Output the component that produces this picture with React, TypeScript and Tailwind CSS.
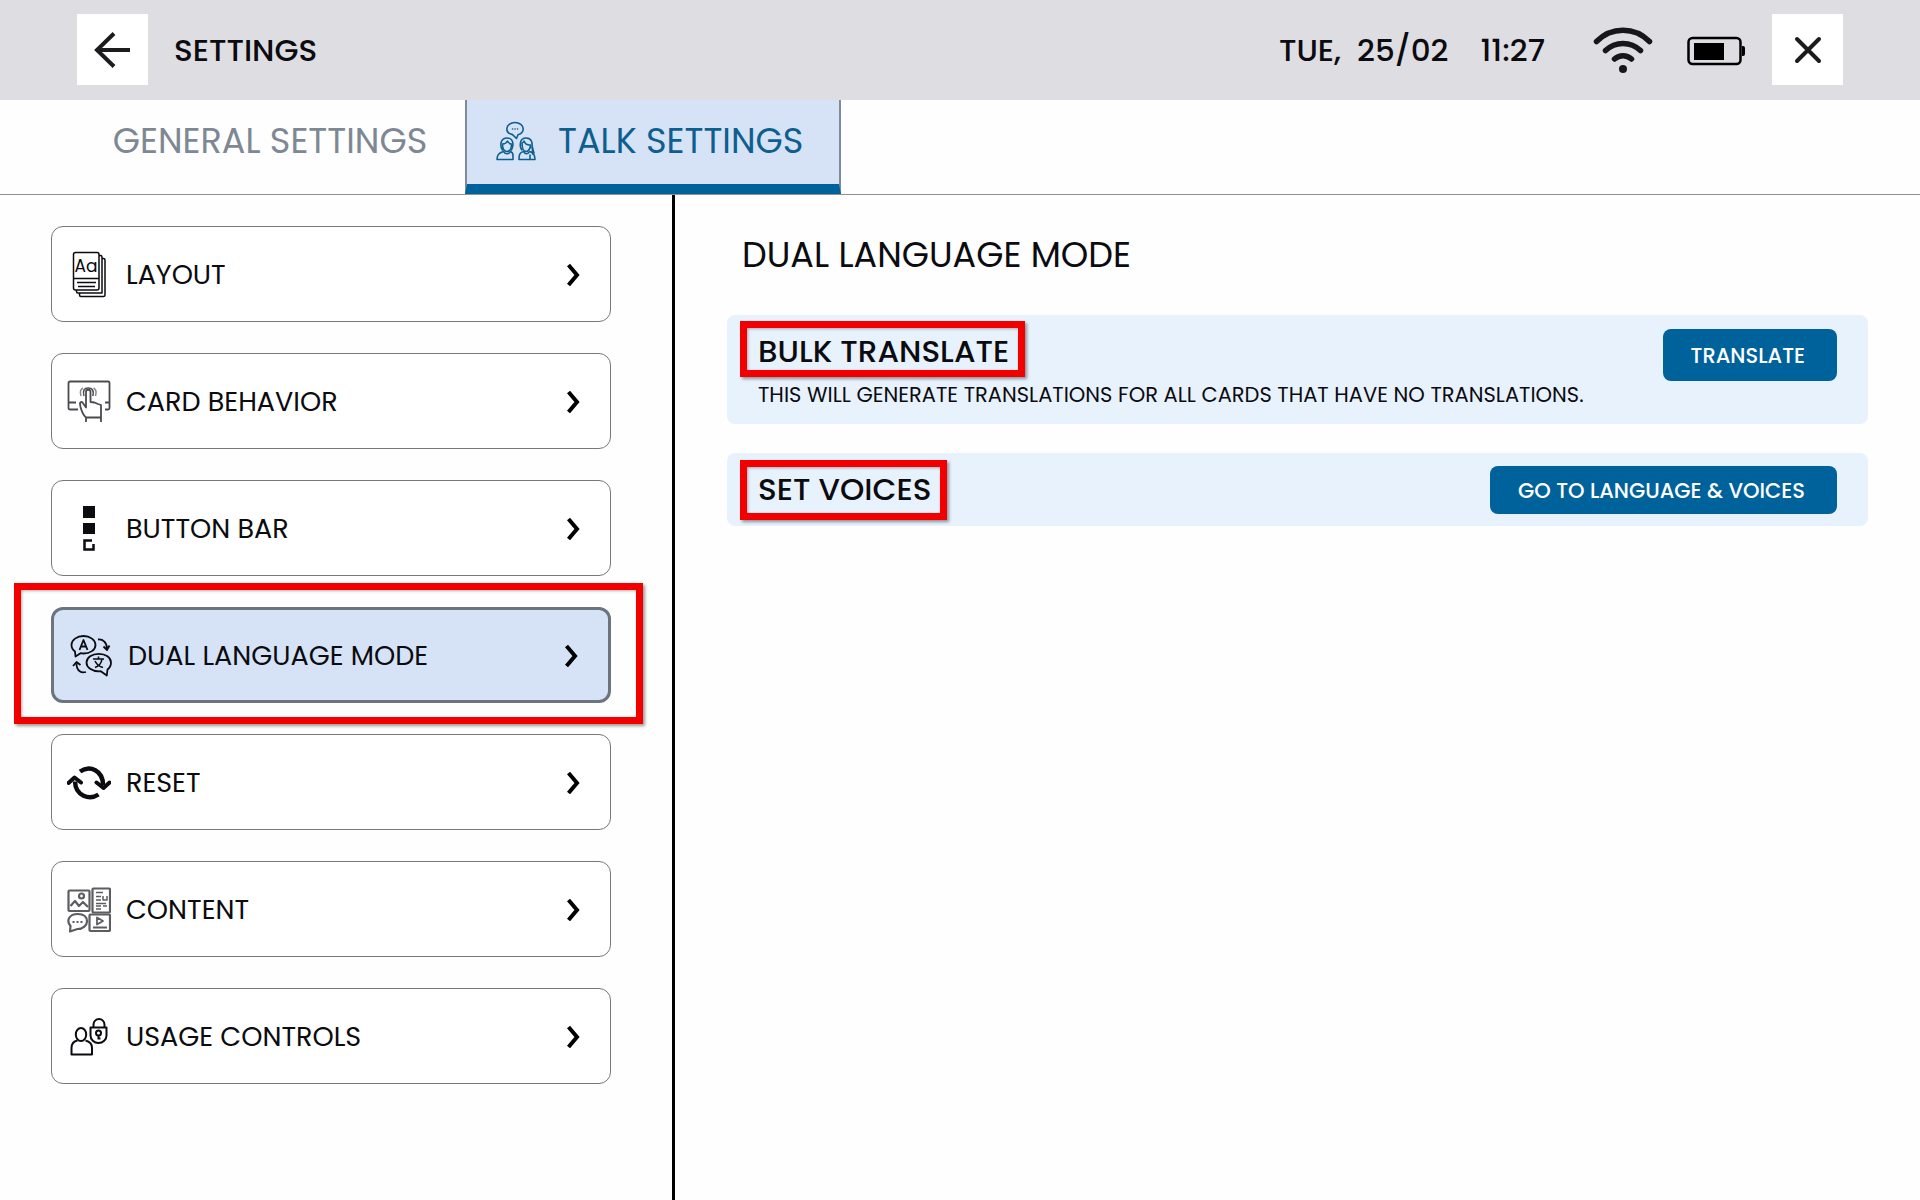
import type { ReactNode } from 'react'
import clsx from 'clsx'

function TalkIcon() {
  return (
    <svg width="40" height="40" viewBox="0 0 40 40" fill="none" stroke="currentColor" strokeWidth="1.600" strokeLinejoin="round" strokeLinecap="round" aria-hidden="true">
      <path d="M16.500 13.600C13.200 13 10.800 10.800 10.800 8 10.800 4.300 14.500 1.500 19 1.500s8.200 2.800 8.200 6.500c0 2.700-2.200 4.900-5.200 5.700l-1.500 3.800z" />
      <path d="M16.500 8h.1M19 8h.1M21.500 8h.1" />
      <path d="M6.500 29c-3-4.500-2-12 4.500-12s7 7 4.500 12" />
      <path d="M6.500 23c0 4.500 1.500 7.500 4.500 7.500s4.500-3 4.500-7.500c-1.500 0-3-1-4-3-1 2-2.500 3-5 3z" />
      <path d="M1 38.500c0-5 2-6.500 6.500-8 1.500 3 5.500 3 7 0 1.800.6 2.500 2 2.500 4v4z" />
      <path d="M26 29c-2.500-3-3-12 4-12 6 0 6.500 5 6 9l2 6" />
      <path d="M26 22c0 4.500 1.500 8.500 4 8.500s4.500-3 4.500-6.500c-3 .3-5.500-1.500-6.500-4-.5 1.200-1 2-2 2z" />
      <path d="M23 38.500c0-4.500.5-7 4.500-8 1.500 3 4.500 3 6 0 4 1 5.500 3 5.500 8zM34 34v4M36.500 26v7" />
    </svg>
  )
}

function NavIcon({ children }: { children: ReactNode }) {
  return (
    <svg width="44" height="48" viewBox="0 0 44 48" fill="none" stroke="currentColor" strokeWidth="1.800" strokeLinejoin="round" aria-hidden="true" className="shrink-0">
      {children}
    </svg>
  )
}

function LayoutIcon() {
  return (
    <NavIcon>
      <rect x="6.500" y="2.500" width="25.500" height="37.500" rx="2" strokeWidth="1.500" />
      <path d="M32 5.500h1.500a1.500 1.500 0 0 1 1.500 1.500v36H11a1.500 1.500 0 0 1-1.500-1.500V40" strokeWidth="1.500" />
      <path d="M35 8.500h1.500A1.500 1.500 0 0 1 38 10v35a1.500 1.500 0 0 1-1.500 1.500H14a1.500 1.500 0 0 1-1.500-1.500v-2" strokeWidth="1.500" />
      <path d="M7 28.500h25M10 32.500h19M11 36.500h17" strokeWidth="1.500" />
      <text x="19" y="22" textAnchor="middle" fontSize="17" fill="currentColor" stroke="none">Aa</text>
    </NavIcon>
  )
}

function TouchIcon() {
  return (
    <NavIcon>
      <g stroke="#4a4a4f">
        <path d="M11 32.500H3A1.500 1.500 0 0 1 1.500 31V6A1.500 1.500 0 0 1 3 4.500h38A1.500 1.500 0 0 1 42.500 6v25a1.500 1.500 0 0 1-1.500 1.500h-3M2 25.500h7M38 25.500h4" />
        <path d="M19 45v-4.500c-2.500-2-4-5-5.500-10.500l-.5-3.500c0-1.500 1.500-2 2.500-1l3.500 5V15c0-3 4.500-3 4.500 0v10l4 .5 3.500 1.500 3 1V45M19 40.500h15.500" />
        <path d="M17 19c-1.500-6 .5-8 4.200-8s6 2 4.600 8" strokeWidth="1.500" />
        <path d="M14 19c-1.500-5 0-7 2-8M28.500 19c1.500-5 0-7-2-8" strokeWidth="1.500" stroke="#88888c" />
      </g>
    </NavIcon>
  )
}

function ButtonBarIcon() {
  return (
    <NavIcon>
      <path d="M16 2h12v12H16zM16 19h12v11H16z" fill="currentColor" stroke="none" />
      <path d="M25 36.500h-7.500v9h9V40" strokeWidth="2.500" strokeLinejoin="miter" />
    </NavIcon>
  )
}

function DualLanguageIcon() {
  return (
    <NavIcon>
      <path d="M6 20.500C3.800 19 2.500 16.700 2.500 14c0-5 5.400-9 12-9s12 4 12 9-5.400 8.500-12 8.500c-1 0-2-.1-3-.3L6.500 25.500z" />
      <path d="M10.500 19l4-10 4 10M12 15.500h5" />
      <path d="M38.500 38.500C40.500 37 42 34.500 42 31.500c0-5-5.400-8.700-12.200-8.700S17.500 26.500 17.500 31.500s5.500 8.800 12.300 8.800l2-.1 6 4.300z" />
      <path d="M24 28h11M29.500 25.500V28M26 36.500c4-1.500 6.500-4.500 7-8.500M26 30c1.500 3 4 5.500 8 6.500" strokeWidth="1.600" />
      <path d="M29 8.500c5-.5 9 3 9 9.500M34.500 15.500l3.500 3.500 2.500-4.500" />
      <path d="M17 41c-5 1.500-9.500-1.500-9.500-8.500M4 35l3.500-4 4 3" />
    </NavIcon>
  )
}

function ResetIcon() {
  return (
    <NavIcon>
      <g strokeWidth="4.500">
        <path d="M13 13.500c10-7 23-1 23 13.500" />
        <path d="M31.500 36.500c-9 6-23 1.500-23.500-13" />
        <path d="M1.500 25L7.500 19.500 14 24.500M29.500 24.500l7 5.500 6-5.500" strokeWidth="4" strokeLinecap="round" />
      </g>
    </NavIcon>
  )
}

function ContentIcon() {
  return (
    <NavIcon>
      <g stroke="#5c5c61" strokeWidth="2.200">
        <rect x="1.500" y="5.500" width="21" height="20.500" rx="1" />
        <circle cx="14.500" cy="11" r="2.500" />
        <path d="M3.500 21l4.500-5 4 5 4-4 5 5" />
        <rect x="25.500" y="3.500" width="17.500" height="24" rx="1" />
        <path d="M29 7.500h7M29 11.500h5M29 15h5M29 18.500h10M29 21h5M36 21h4M29 24h5M36 11v4h4v-4" strokeWidth="1.500" />
        <path d="M3.500 41C-1.500 35 3 29 10.500 29s9.500 4 9.500 7.500-4 7.500-9.500 7.500L3 46.500z" />
        <path d="M5.500 37h2M9.500 37h2M13.500 37h2" strokeWidth="2" />
        <rect x="22.500" y="29.500" width="20.500" height="16.500" rx="1" />
        <path d="M30 32.500v7l6-3.500zM26 42.500h14" strokeWidth="1.800" />
      </g>
    </NavIcon>
  )
}

function UsageIcon() {
  return (
    <NavIcon>
      <g strokeWidth="2">
        <ellipse cx="14" cy="22.500" rx="5.200" ry="6.500" />
        <path d="M10.500 28.500C6 29.500 4.500 32 4.500 36v6.500h20.500V36c0-4-2-6.500-6.500-7.500" />
        <path d="M26.500 15v-2.500a5.500 5.500 0 0 1 11 0V15" />
        <path d="M23.500 15.500h16v8c0 4-3.500 7.500-8 7.500s-8-3.500-8-7.500z" />
        <circle cx="31.500" cy="21" r="2.500" />
        <path d="M31.500 23.500v4M31.500 26.500h2" />
      </g>
    </NavIcon>
  )
}

const menu = [
  { label: 'LAYOUT', icon: <LayoutIcon /> },
  { label: 'CARD BEHAVIOR', icon: <TouchIcon /> },
  { label: 'BUTTON BAR', icon: <ButtonBarIcon /> },
  { label: 'DUAL LANGUAGE MODE', icon: <DualLanguageIcon />, active: true },
  { label: 'RESET', icon: <ResetIcon /> },
  { label: 'CONTENT', icon: <ContentIcon /> },
  { label: 'USAGE CONTROLS', icon: <UsageIcon /> },
]

const highlight = 'pointer-events-none absolute border-[7px] border-[#f20000] shadow-[2px_2px_3px_rgba(0,0,0,0.4),inset_1px_1px_3px_rgba(0,0,0,0.3)]'

export default function App() {
  return (
    <div className="flex min-h-screen flex-col bg-[#fefefe] font-['Poppins','Inter',sans-serif] text-[#0b0b10]">
      {/* Top bar */}
      <header className="flex h-[100px] shrink-0 items-center justify-between bg-[#dedde2] px-[77px] pb-0.5">
        <div className="flex items-center gap-[26px]">
          <button type="button" aria-label="Back" className="flex size-[71px] items-center justify-center bg-white">
            <svg width="38" height="38" viewBox="0 0 38 38" fill="none" stroke="#1c1c1e" strokeWidth="4" aria-hidden="true">
              <path d="M36 20H3M20 3.500L3 20l17 16.500" />
            </svg>
          </button>
          <h1 className="pt-0.5 text-[31px] leading-10 font-medium">SETTINGS</h1>
        </div>
        <div className="flex items-center">
          <div className="flex pt-0.5 text-[31px] leading-10 font-medium">
            <span>TUE,</span>
            <span className="ml-4">25/02</span>
            <span className="ml-8">11:27</span>
          </div>
          <svg width="60" height="48" viewBox="0 0 60 48" fill="none" stroke="#17171a" strokeWidth="5.500" strokeLinecap="round" className="mt-0.5 ml-12" aria-hidden="true">
            <path d="M3.500 15.500c15-15 38-15 53 0M12.500 24.500c10-9.500 25-9.500 35 0M21.500 33c5-4.500 12-4.500 17 0" />
            <circle cx="30" cy="43" r="4" fill="#17171a" stroke="none" />
          </svg>
          <svg width="58" height="30" viewBox="0 0 58 30" fill="none" stroke="#000" strokeWidth="2.500" className="mt-1 ml-[34px]" aria-hidden="true">
            <rect x="1.500" y="2" width="52" height="26" rx="4" />
            <path d="M7 7h30v17H7zM55 10h1a2 2 0 0 1 2 2v6a2 2 0 0 1-2 2h-1z" fill="#000" stroke="none" />
          </svg>
          <button type="button" aria-label="Close" className="ml-[27px] flex size-[71px] items-center justify-center bg-white">
            <svg width="28" height="30" viewBox="0 0 28 30" fill="none" stroke="#1c1c1e" strokeWidth="4" strokeLinecap="round" aria-hidden="true">
              <path d="M3 5l22 22M25 5L3 27" />
            </svg>
          </button>
        </div>
      </header>

      {/* Tabs */}
      <nav className="flex h-[95px] shrink-0 border-b border-[#8f9094] pl-[75px] text-[35px] leading-10">
        <button type="button" className="flex w-[390px] items-center justify-center pb-3 text-[#7e8894]">
          GENERAL SETTINGS
        </button>
        <button type="button" className="flex w-[376px] items-center gap-[22px] border-x-2 border-x-[#7f8b9b] border-b-[10px] border-b-[#00629b] bg-[#d6e3f7] pb-0.5 pl-[29px] text-[#0c5f8f]">
          <TalkIcon />
          TALK SETTINGS
        </button>
      </nav>

      <div className="flex flex-1">
        {/* Side menu */}
        <aside className="flex w-[675px] shrink-0 flex-col gap-[31px] border-r-[3px] border-black pt-[31px] pr-[61px] pb-8 pl-[51px]">
          {menu.map((item) => (
            <div key={item.label} className="relative">
              <button
                type="button"
                className={clsx(
                  'flex h-24 w-full items-center gap-[15px] rounded-xl pr-[30px] pl-[15px] text-left text-[27px] leading-9',
                  item.active ? 'border-[3px] border-[#6c747d] bg-[#d6e3f7]' : 'border border-[#77777c] bg-white',
                )}
              >
                {item.icon}
                <span className="flex-1 pt-0.5">{item.label}</span>
                <svg width="13" height="24" viewBox="0 0 13 24" fill="none" stroke="#000" strokeWidth="4" aria-hidden="true">
                  <path d="M1.500 3l8.500 10-8.500 10" />
                </svg>
              </button>
              {item.active && <div className={clsx(highlight, '-top-6 right-[-32px] bottom-[-21px] left-[-37px]')} />}
            </div>
          ))}
        </aside>

        {/* Detail panel */}
        <main className="flex min-w-0 flex-1 flex-col px-[52px] pt-10">
          <h2 className="pl-[15px] text-[35px] leading-10">DUAL LANGUAGE MODE</h2>

          <section className="mt-10 flex items-start justify-between rounded-lg bg-[#e8f2fd] pt-3.5 pr-[31px] pb-[15px] pl-[31px]">
            <div>
              <div className="relative w-fit">
                <h3 className="pb-0.5 text-[31px] leading-[44px] font-medium">BULK TRANSLATE</h3>
                <div className={clsx(highlight, '-top-2 -right-4 -bottom-0.5 -left-[18px]')} />
              </div>
              <p className="mt-1.5 text-[21px] leading-7">THIS WILL GENERATE TRANSLATIONS FOR ALL CARDS THAT HAVE NO TRANSLATIONS.</p>
            </div>
            <button type="button" className="h-[52px] shrink-0 rounded-lg bg-[#00629b] pt-0.5 pr-8 pl-7 text-[21px] font-medium text-white">
              TRANSLATE
            </button>
          </section>

          <section className="mt-[29px] flex h-[73px] items-center justify-between rounded-lg bg-[#e8f2fd] pr-[31px] pl-[31px]">
            <div className="relative w-fit">
              <h3 className="pb-0.5 text-[31px] leading-[44px] font-medium">SET VOICES</h3>
              <div className={clsx(highlight, '-inset-y-[7px] -right-4 -left-[18px]')} />
            </div>
            <button type="button" className="h-12 shrink-0 rounded-lg bg-[#00629b] pt-0.5 pr-8 pl-7 text-[21px] font-medium text-white">
              GO TO LANGUAGE &amp; VOICES
            </button>
          </section>
        </main>
      </div>
    </div>
  )
}
